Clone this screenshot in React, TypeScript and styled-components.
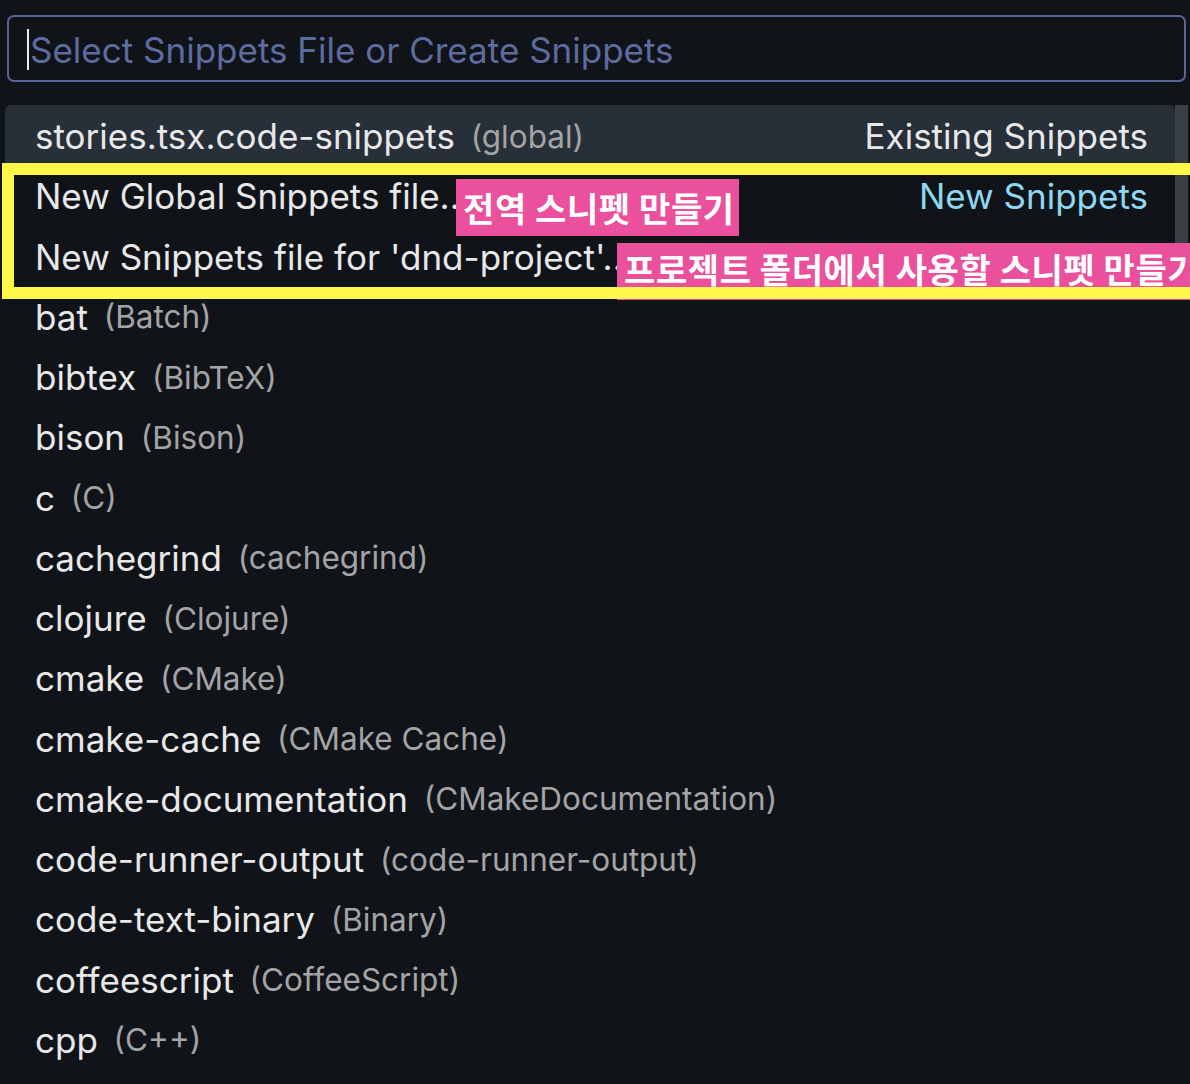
import React from 'react'
import styled, { createGlobalStyle } from 'styled-components'

const GlobalStyle = createGlobalStyle`
  html, body {
    margin: 0;
    padding: 0;
    background: #101419;
    overflow: hidden;
  }
  body {
    font-family: Inter, "Noto Sans", "Noto Sans CJK KR", sans-serif;
  }
`

const Page = styled.div`
  width: 1190px;
  height: 1084px;
  padding-top: 15px;
  box-sizing: border-box;
  overflow: hidden;
`

const SearchBox = styled.div`
  margin: 0 4px 0 7px;
  height: 67px;
  box-sizing: border-box;
  border: 2px solid #5a6597;
  border-radius: 7px;
  display: flex;
  align-items: center;
  padding-left: 18px;
  padding-top: 2px;
  font-size: 35px;
  color: #5d6b9f;
  white-space: nowrap;
`

const Caret = styled.span`
  width: 2px;
  height: 41px;
  background: #ececec;
  margin-right: 1px;
`

const List = styled.div`
  position: relative;
  margin: 23px 0 0 5px;
  width: 1170px;
`

const Scrollbar = styled.div`
  position: absolute;
  left: 1170px;
  top: 0;
  width: 13px;
  height: 190px;
  background: #3a3f46;
  z-index: 0;
`

const Row = styled.div<{ $active?: boolean }>`
  height: 60.25px;
  display: flex;
  align-items: center;
  padding: 2px 27px 0 30px;
  box-sizing: border-box;
  font-size: 35px;
  color: #e8e8e8;
  white-space: nowrap;
  background: ${(p) => (p.$active ? '#272f39' : 'transparent')};
  border-radius: ${(p) => (p.$active ? '6px 6px 0 0' : '0')};
`

const Desc = styled.span`
  font-size: 0.9em;
  color: #a4a4a4;
  margin-left: 0.5em;
`

const Kind = styled.span<{ $accent?: boolean }>`
  margin-left: auto;
  color: ${(p) => (p.$accent ? '#8ed8f2' : '#e8e8e8')};
`

const Group = styled.div`
  position: relative;

  &::after {
    content: '';
    position: absolute;
    left: -3px;
    right: -40px;
    top: -2px;
    bottom: -13px;
    border: 12px solid #fdf84a;
    pointer-events: none;
    z-index: 2;
  }
`

const Note = styled.div<{ $left: number; $top: number; $width?: number; $lift?: number }>`
  position: absolute;
  left: ${(p) => p.$left}px;
  top: ${(p) => p.$top}px;
  ${(p) => (p.$width ? `width: ${p.$width}px;` : 'right: -40px;')}
  height: 57px;
  box-sizing: border-box;
  padding-left: 7px;
  padding-bottom: ${(p) => p.$lift ?? 0}px;
  display: flex;
  align-items: center;
  background: #ea509b;
  color: #ffffff;
  font-family: "Noto Sans CJK KR", sans-serif;
  font-weight: 700;
  font-size: 34px;
  letter-spacing: 0.6px;
  white-space: nowrap;
  z-index: 1;
`

type Lang = { id: string; name: string }

const langs: Lang[] = [
  { id: 'bat', name: 'Batch' },
  { id: 'bibtex', name: 'BibTeX' },
  { id: 'bison', name: 'Bison' },
  { id: 'c', name: 'C' },
  { id: 'cachegrind', name: 'cachegrind' },
  { id: 'clojure', name: 'Clojure' },
  { id: 'cmake', name: 'CMake' },
  { id: 'cmake-cache', name: 'CMake Cache' },
  { id: 'cmake-documentation', name: 'CMakeDocumentation' },
  { id: 'code-runner-output', name: 'code-runner-output' },
  { id: 'code-text-binary', name: 'Binary' },
  { id: 'coffeescript', name: 'CoffeeScript' },
  { id: 'cpp', name: 'C++' },
]

export default function App() {
  return (
    <Page>
      <GlobalStyle />
      <SearchBox>
        <Caret />
        Select Snippets File or Create Snippets
      </SearchBox>
      <List>
        <Scrollbar />
        <Row $active>
          stories.tsx.code-snippets
          <Desc>(global)</Desc>
          <Kind>Existing Snippets</Kind>
        </Row>
        <Group>
          <Row>
            New Global Snippets file...
            <Kind $accent>New Snippets</Kind>
          </Row>
          <Row>New Snippets file for 'dnd-project'...</Row>
          <Note $left={451} $top={14} $width={283}>
            전역 스니펫 만들기
          </Note>
          <Note $left={612} $top={78} $lift={7}>
            프로젝트 폴더에서 사용할 스니펫 만들기
          </Note>
        </Group>
        {langs.map((l) => (
          <Row key={l.id}>
            {l.id}
            <Desc>({l.name})</Desc>
          </Row>
        ))}
      </List>
    </Page>
  )
}
